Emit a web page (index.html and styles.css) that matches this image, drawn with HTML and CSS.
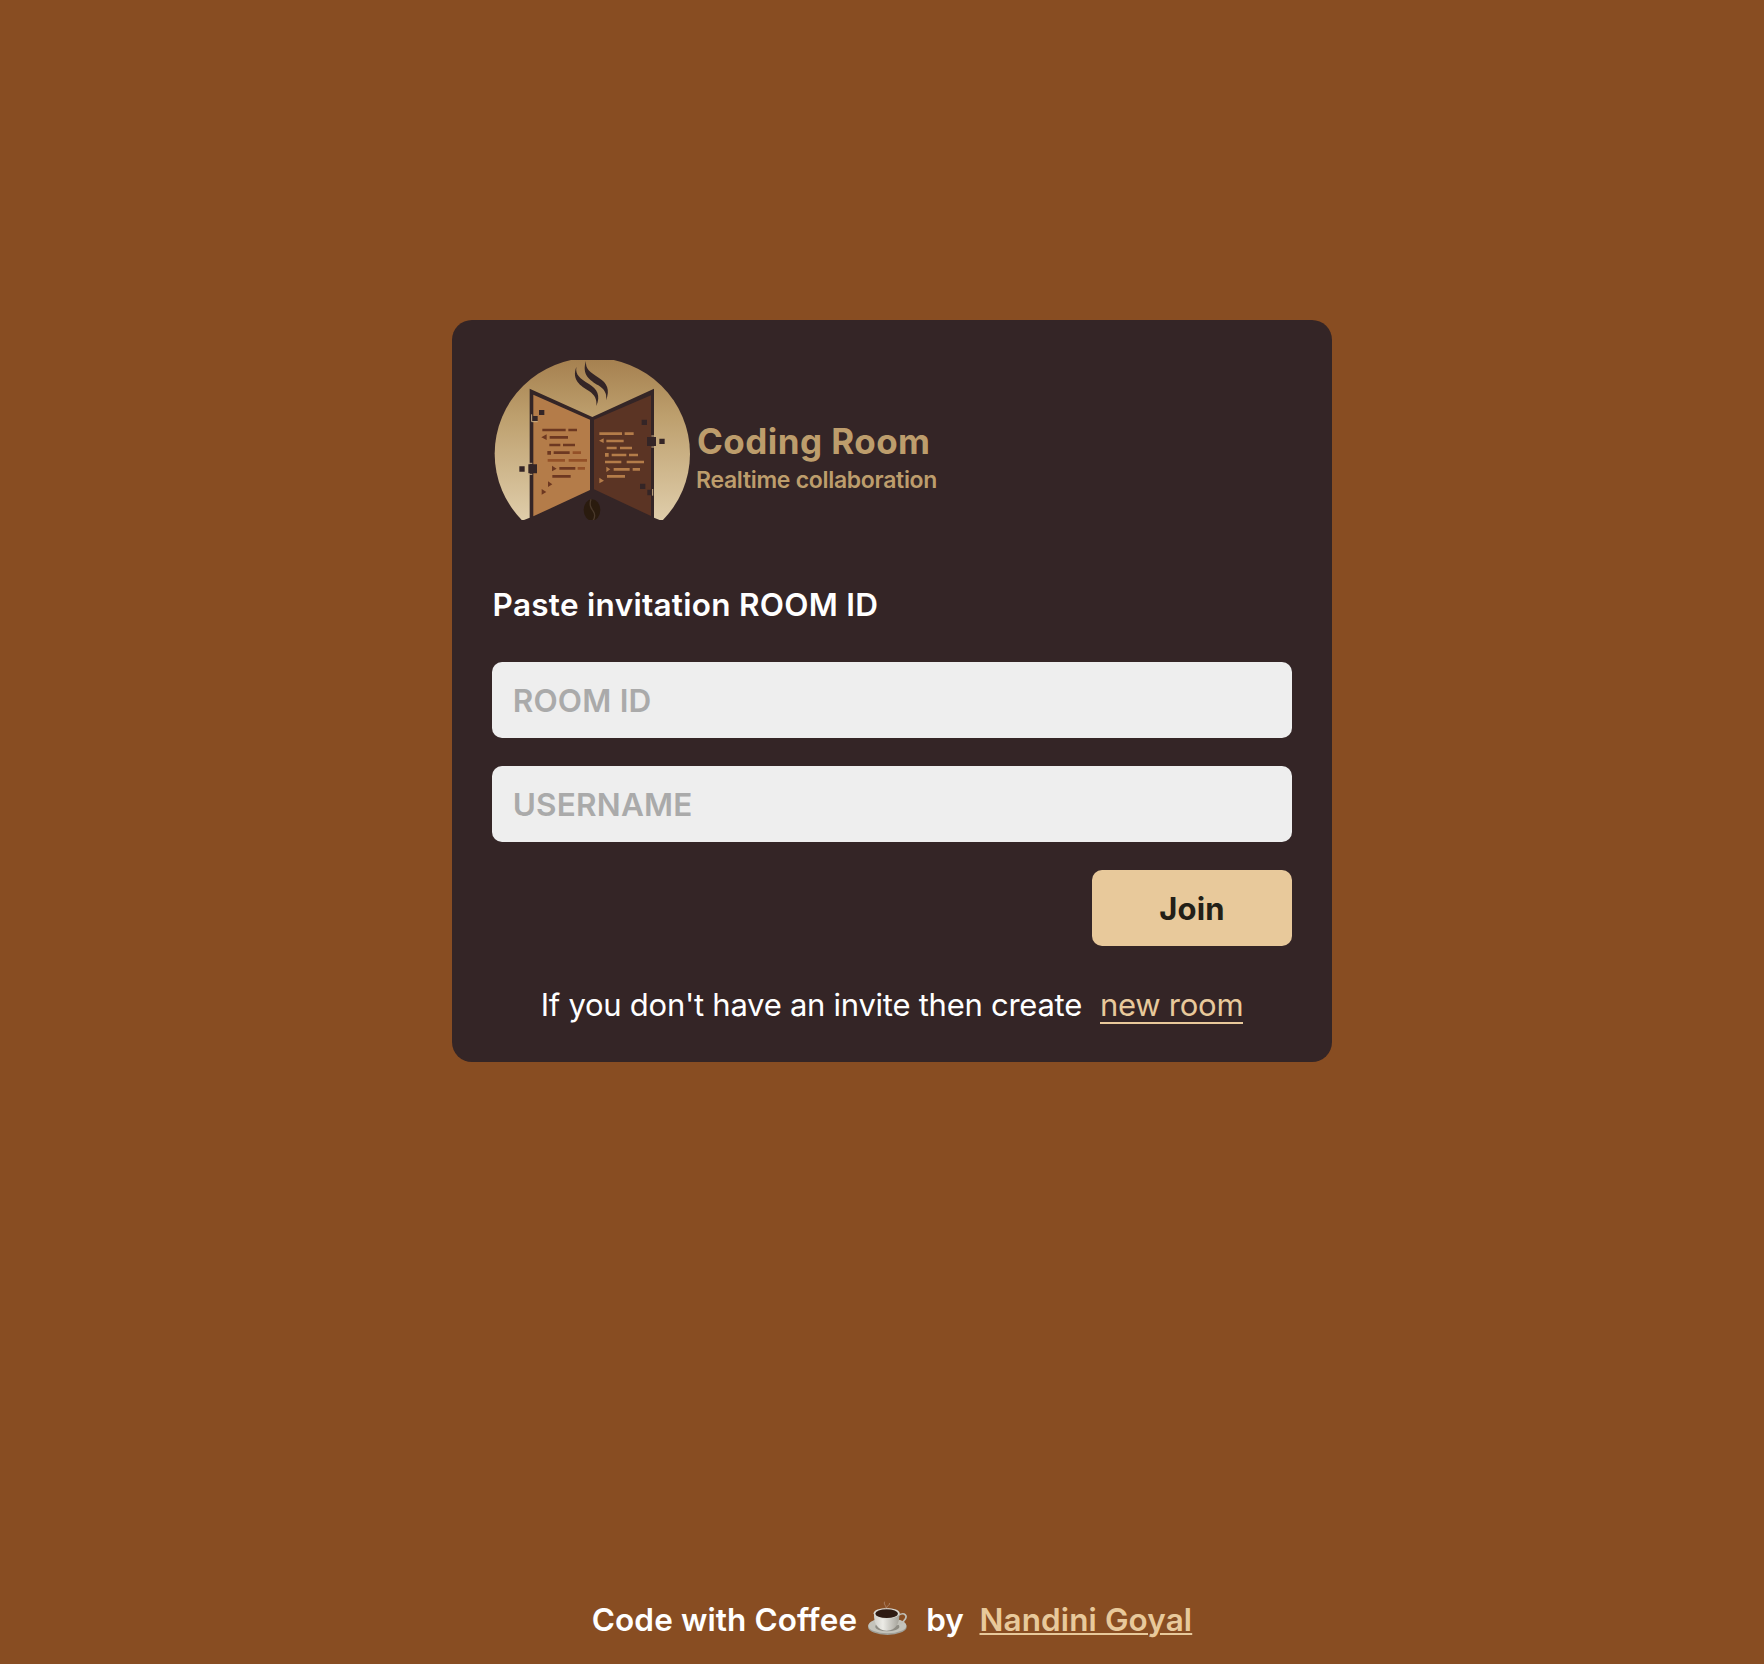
FILE: index.html
```html
<!DOCTYPE html>
<html lang="en">
<head>
<meta charset="utf-8">
<title>Coding Room</title>
<link rel="stylesheet" href="styles.css">
</head>
<body>
<main class="home">
  <form class="card">
    <div class="brand">
      <svg class="brand-mark" viewBox="36 45 600 480" aria-hidden="true">
        <defs>
          <linearGradient id="disc" gradientUnits="userSpaceOnUse" x1="0" y1="45" x2="0" y2="525">
            <stop offset="0" stop-color="#a68150"/>
            <stop offset=".35" stop-color="#bd9f6d"/>
            <stop offset="1" stop-color="#dfcdaa"/>
          </linearGradient>
        </defs>
        <ellipse cx="337" cy="326" rx="293" ry="288" fill="url(#disc)"/>
        <path d="M149 131L337 216L522 131V518L539 525H132L149 518Z" fill="#342526"/>
        <path d="M160 149L330 224V435L160 514Z" fill="#b47c49"/>
        <path d="M342 224L513 151V513L342 433Z" fill="#5b3424"/>
        <g fill="#342526">
          <path d="M289 66C274 105 302 123 327 138C345 150 351 164 349 183C363 151 351 132 327 117C299 99 286 91 289 66Z"/>
          <path d="M318 48C304 89 330 106 355 121C373 132 382 146 378 166C391 134 381 114 357 99C329 80 316 73 318 48Z"/>
          <path d="M177 195h16v15h-16zM157 213h16v15h-16zM118 364h16v16h-16zM145 358h26v27h-26zM485 224h16v16h-16zM501 276h27v27h-27zM538 281h16v16h-16zM480 416h16v16h-16zM502 434h14v17h-14z"/>
        </g>
        <path d="M155 208v22h18M145 355h12M145 388h12M514 273h12M514 306h12M518 432v20" fill="none" stroke="#c9ad83" stroke-width="3"/>
        <path d="M187 251h70v8h-70zM265 251h26v8h-26zM209 273h55v8h-55zM208 296h33v8h-33zM249 296h36v8h-36zM202 318h11v11h-11zM221 319h48v8h-48zM238 366h48v8h-48zM217 390h55v8h-55zM200 268v17l-16-8zM216 362v17l14-8zM204 409v17l13-8zM185 432v17l14-8z" fill="#6d3821"/>
        <path d="M278 319h25v8h-25zM203 342h52v8h-52zM266 342h55v8h-55zM293 366h22v8h-22z" fill="#945128"/>
        <path d="M358 262h68v8h-68zM434 262h27v8h-27zM379 284h52v8h-52zM380 305h30v8h-30zM420 305h36v8h-36zM375 324h11v11h-11zM395 326h44v8h-44zM447 326h27v8h-27zM375 347h49v8h-49zM440 347h52v8h-52zM401 369h48v8h-48zM458 369h22v8h-22zM381 390h54v8h-54zM371 280v14l-14-7zM379 365v16l12-8zM358 398v17l14-8z" fill="#b47c49"/>
        <ellipse cx="336" cy="495" rx="25" ry="32" fill="#2a1b0e"/>
        <path d="M333 463C327 480 333 489 340 499C346 508 344 519 339 527" fill="none" stroke="#4a392b" stroke-width="4"/>
      </svg>
      <div class="brand-text">
        <div class="brand-name">Coding Room</div>
        <div class="brand-tag">Realtime collaboration</div>
      </div>
    </div>
    <h4 class="label">Paste invitation ROOM ID</h4>
    <div class="fields">
      <input class="input" type="text" placeholder="ROOM ID">
      <input class="input" type="text" placeholder="USERNAME">
      <button class="join" type="button">Join</button>
    </div>
    <p class="create"><span>If you don't have an invite then create</span><a class="create-link">new room</a></p>
  </form>
</main>
<footer class="footer">
  <span>Code with Coffee</span>
  <svg class="cup" viewBox="0 0 117 105" aria-hidden="true">
    <defs>
      <linearGradient id="china" x1="0" y1="0" x2="1" y2="0">
        <stop offset="0" stop-color="#cfcec8"/><stop offset=".35" stop-color="#ecebe6"/><stop offset="1" stop-color="#a3a199"/>
      </linearGradient>
    </defs>
    <ellipse cx="58" cy="77" rx="58" ry="25" fill="#a09f97"/>
    <ellipse cx="58" cy="74" rx="57" ry="23" fill="#c4c3bb"/>
    <ellipse cx="58" cy="77" rx="36" ry="14" fill="#8e8c84"/>
    <path d="M91 43C111 31 121 46 108 59C102 67 94 69 86 70" fill="none" stroke="#c0bfb7" stroke-width="5"/>
    <path d="M18 39C17 66 27 88 56 89C85 88 95 66 94 39Z" fill="url(#china)"/>
    <ellipse cx="56" cy="37" rx="39" ry="16" fill="#d9d8d2"/>
    <ellipse cx="56" cy="38" rx="34" ry="13" fill="#2e1a12"/>
    <path d="M51 24C60 17 45 12 50 2M58 24C50 15 68 14 64 6" fill="none" stroke="#b99782" stroke-width="3" opacity=".65"/>
  </svg>
  <span>by</span>
  <a class="author">Nandini Goyal</a>
</footer>
</body>
</html>
```
FILE: styles.css
```css
* { box-sizing: border-box; margin: 0; }
body {
  height: 1664px;
  display: flex;
  flex-direction: column;
  background: #884d22;
  color: #fff;
  font-family: Inter, "Liberation Sans", sans-serif;
  font-size: 31px;
  line-height: 38px;
  overflow: hidden;
}
.home { flex: 1; display: flex; justify-content: center; align-items: flex-start; padding: 320px 0 0 20px; }
.card { width: 880px; height: 742px; padding: 40px; border-radius: 20px; background: #342526; }
.brand { display: flex; height: 160px; }
.brand-mark { width: 200px; height: 160px; }
.brand-text { padding: 60px 0 0 4px; color: #bd9d6c; }
.brand-name { font-size: 35px; line-height: 42px; font-weight: 700; white-space: nowrap; padding-left: 1px; letter-spacing: .45px; }
.brand-tag { margin-top: 3px; font-size: 23px; line-height: 30px; font-weight: 600; white-space: nowrap; letter-spacing: -.3px; }
.label { margin-top: 66px; padding-left: .6px; font-size: 31.5px; font-weight: 620; letter-spacing: .28px; }
.fields { display: flex; flex-direction: column; gap: 28px; margin-top: 38px; }
.input {
  width: 100%;
  height: 76px;
  padding: 19px 20.7px 19px;
  border: 0;
  border-radius: 10px;
  background: #eee;
  color: #231f17;
  font: inherit;
  font-size: 31.5px;
  font-weight: 620;
  letter-spacing: .2px;
}
.input::placeholder { color: #aaa; opacity: 1; }
.join {
  align-self: flex-end;
  width: 200px;
  height: 76px;
  padding: 2px 0 0;
  border: 0;
  border-radius: 10px;
  background: #e8c99b;
  color: #231f17;
  font: inherit;
  font-weight: 650;
  letter-spacing: .2px;
}
.create { display: flex; justify-content: center; gap: 18px; margin-top: 40px; letter-spacing: -.26px; }
.create-link { height: 38px; color: #e8c99b; border-bottom: 2px solid #e8c99b; }
.footer { display: flex; justify-content: center; align-items: flex-start; height: 64px; padding: 1px 0 0 20px; font-size: 31.5px; font-weight: 620; letter-spacing: .1px; font-variant-ligatures: none; }
.cup { width: 39px; height: 35px; margin: 0 19.5px 0 10.5px; }
.author {
  margin-left: 15.5px;
  color: #e8c99b;
  text-decoration: underline;
  text-decoration-thickness: 2px;
  text-underline-offset: 2px;
}
```
